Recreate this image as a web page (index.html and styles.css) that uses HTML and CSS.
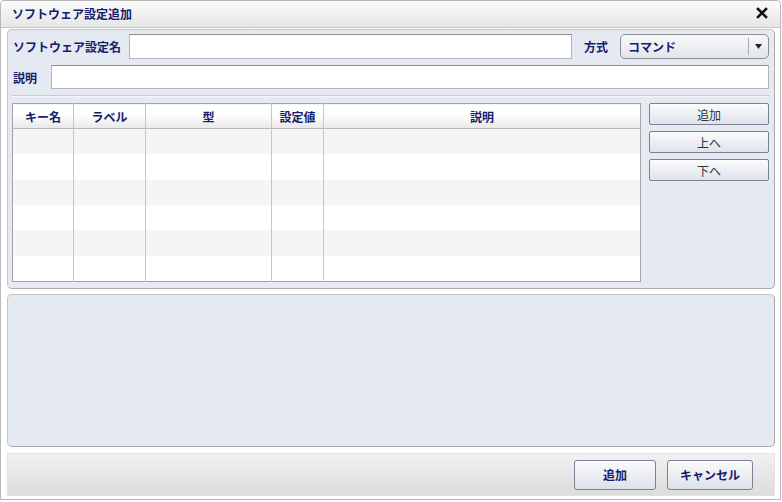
FILE: index.html
```html
<!DOCTYPE html>
<html lang="ja">
<head>
  <meta charset="UTF-8">
  <title>ソフトウェア設定追加</title>
  <link rel="stylesheet" href="styles.css">
</head>
<body>

  <div class="window">
    <div class="titlebar">
      <span class="title">ソフトウェア設定追加</span>
      <svg class="close" width="12" height="12" viewBox="0 0 12 12">
        <path d="M2 2 L10 10 M10 2 L2 10" stroke="#111" stroke-width="2.6" stroke-linecap="square"/>
      </svg>
    </div>

    <div class="content">
      <div class="panel panel-main">
        <div class="row row-name">
          <label class="lbl lbl-name">ソフトウェア設定名</label>
          <input class="field field-name" type="text">
          <label class="lbl lbl-type">方式</label>
          <div class="select">
            <span class="select-text">コマンド</span>
            <span class="select-btn">
              <svg width="7" height="5" viewBox="0 0 7 5"><path d="M0 0 H7 L3.5 5 Z" fill="#222"/></svg>
            </span>
          </div>
        </div>
        <div class="row row-desc">
          <label class="lbl lbl-desc">説明</label>
          <input class="field field-desc" type="text">
        </div>
        <div class="sep"></div>

        <div class="grid-area">
          <table class="grid">
            <colgroup>
              <col style="width:61px">
              <col style="width:72px">
              <col style="width:126px">
              <col style="width:52px">
              <col>
            </colgroup>
            <thead>
              <tr><th>キー名</th><th>ラベル</th><th>型</th><th>設定値</th><th>説明</th></tr>
            </thead>
            <tbody>
              <tr class="alt"><td></td><td></td><td></td><td></td><td></td></tr>
              <tr><td></td><td></td><td></td><td></td><td></td></tr>
              <tr class="alt"><td></td><td></td><td></td><td></td><td></td></tr>
              <tr><td></td><td></td><td></td><td></td><td></td></tr>
              <tr class="alt"><td></td><td></td><td></td><td></td><td></td></tr>
              <tr class="last"><td></td><td></td><td></td><td></td><td></td></tr>
            </tbody>
          </table>

          <div class="side-buttons">
            <button class="sbtn">追加</button>
            <button class="sbtn">上へ</button>
            <button class="sbtn">下へ</button>
          </div>
        </div>
      </div>

      <div class="panel panel-empty"></div>

      <div class="footer">
        <button class="fbtn fbtn-add">追加</button>
        <button class="fbtn fbtn-cancel">キャンセル</button>
      </div>
    </div>
  </div>

</body>
</html>
```

FILE: styles.css
```css
body {
  margin: 0;
  background: #fff;
  font-family: "Noto Sans CJK JP", "DejaVu Sans", sans-serif;
  font-size: 12px;
  color: #14206b;
}

.window {
  width: 781px;
  height: 500px;
  box-sizing: border-box;
  border: 1px solid #b9b9b9;
  border-radius: 4px 4px 0 0;
  background: #fff;
  display: flex;
  flex-direction: column;
}

.titlebar {
  height: 27px;
  flex: none;
  box-sizing: border-box;
  display: flex;
  align-items: center;
  justify-content: space-between;
  padding: 0 12px 0 11px;
  background: linear-gradient(#fbfbfb, #e6e6e6);
  border-bottom: 1px solid #c3c3c3;
  border-radius: 4px 4px 0 0;
}

.title {
  font-weight: bold;
  font-size: 12px;
  margin-top: -1px;
}

.close {
  margin-top: -2px;
}

.content {
  flex: 1;
  padding: 1px 5px 0 6px;
  display: flex;
  flex-direction: column;
}

.panel {
  box-sizing: border-box;
  background: #e4e9f2;
  border: 1px solid #a9a9a9;
  border-top-color: #c4c4c4;
  border-left-color: #c4c4c4;
  border-radius: 5px;
}

.panel-main {
  height: 260px;
  padding: 4px 5px 5px 4px;
}

.panel-empty {
  height: 153px;
  margin-top: 5px;
}

.row {
  display: flex;
  align-items: center;
}

.row-name {
  height: 25px;
}

.row-desc {
  height: 24px;
  margin-top: 6px;
}

.lbl {
  font-weight: bold;
  font-size: 12px;
  padding-left: 1px;
}

.lbl-name {
  width: 116px;
}

.lbl-type {
  width: 36px;
  margin-left: 11px;
}

.lbl-desc {
  width: 38px;
}

.field {
  box-sizing: border-box;
  height: 100%;
  border: 1px solid #b4b4b4;
  border-top-color: #8c8c8c;
  background: #fff;
  margin: 0;
  padding: 0;
}

.field-name {
  width: 443px;
}

.field-desc {
  width: 718px;
}

.select {
  box-sizing: border-box;
  width: 149px;
  height: 25px;
  border: 1px solid #8e8e96;
  border-radius: 5px;
  background: linear-gradient(#f8f8f9, #e2e5eb);
  display: flex;
  align-items: center;
}

.select-text {
  flex: 1;
  padding-left: 7px;
  font-weight: bold;
}

.select-btn {
  width: 19px;
  height: 17px;
  border-left: 1px solid #a8a8a8;
  display: flex;
  align-items: center;
  justify-content: center;
}

.sep {
  height: 1px;
  margin-top: 6px;
  background: #c6cad1;
  border-bottom: 1px solid #f4f6f9;
}

.grid-area {
  display: flex;
  gap: 8px;
  margin-top: 6px;
}

.grid {
  width: 630px;
  height: 179px;
  border-collapse: collapse;
  table-layout: fixed;
  border: 1px solid #a3a3a3;
  background: #fff;
}

.grid th {
  height: 24px;
  padding: 0;
  font-weight: bold;
  font-size: 12px;
  background: linear-gradient(#ffffff 40%, #e8e8e8);
  border-right: 1px solid #c6c6c6;
  border-bottom: 1px solid #b8b8b8;
}

.grid td {
  height: 25px;
  padding: 0;
  border-right: 1px solid #c6c6c6;
}

.grid th:last-child,
.grid td:last-child {
  border-right: none;
}

.grid tr.alt td {
  background: #f5f5f5;
}

.side-buttons {
  display: flex;
  flex-direction: column;
  gap: 6px;
}

.sbtn {
  width: 120px;
  height: 22px;
  margin: 0;
  padding: 0;
  border: 1px solid #7c8090;
  border-radius: 2px;
  background: linear-gradient(#fbfbfc, #dfe3ea);
  font-family: "Noto Sans CJK JP", sans-serif;
  font-size: 12px;
  color: #333;
}

.footer {
  height: 43px;
  margin-top: 6px;
  box-sizing: border-box;
  border: 1px solid #e2e2e2;
  background: linear-gradient(#f1f1f1, #dcdcdc);
  display: flex;
  justify-content: flex-end;
  align-items: center;
  gap: 11px;
  padding: 0 21px 0 0;
}

.fbtn {
  height: 30px;
  margin: 0;
  padding: 0;
  border: 1px solid #7d8193;
  border-radius: 3px;
  background: linear-gradient(#fbfbfc, #dde1e9);
  font-family: "Noto Sans CJK JP", sans-serif;
  font-size: 12px;
  font-weight: bold;
  color: #14206b;
}

.fbtn-add {
  width: 82px;
}

.fbtn-cancel {
  width: 86px;
}
```
